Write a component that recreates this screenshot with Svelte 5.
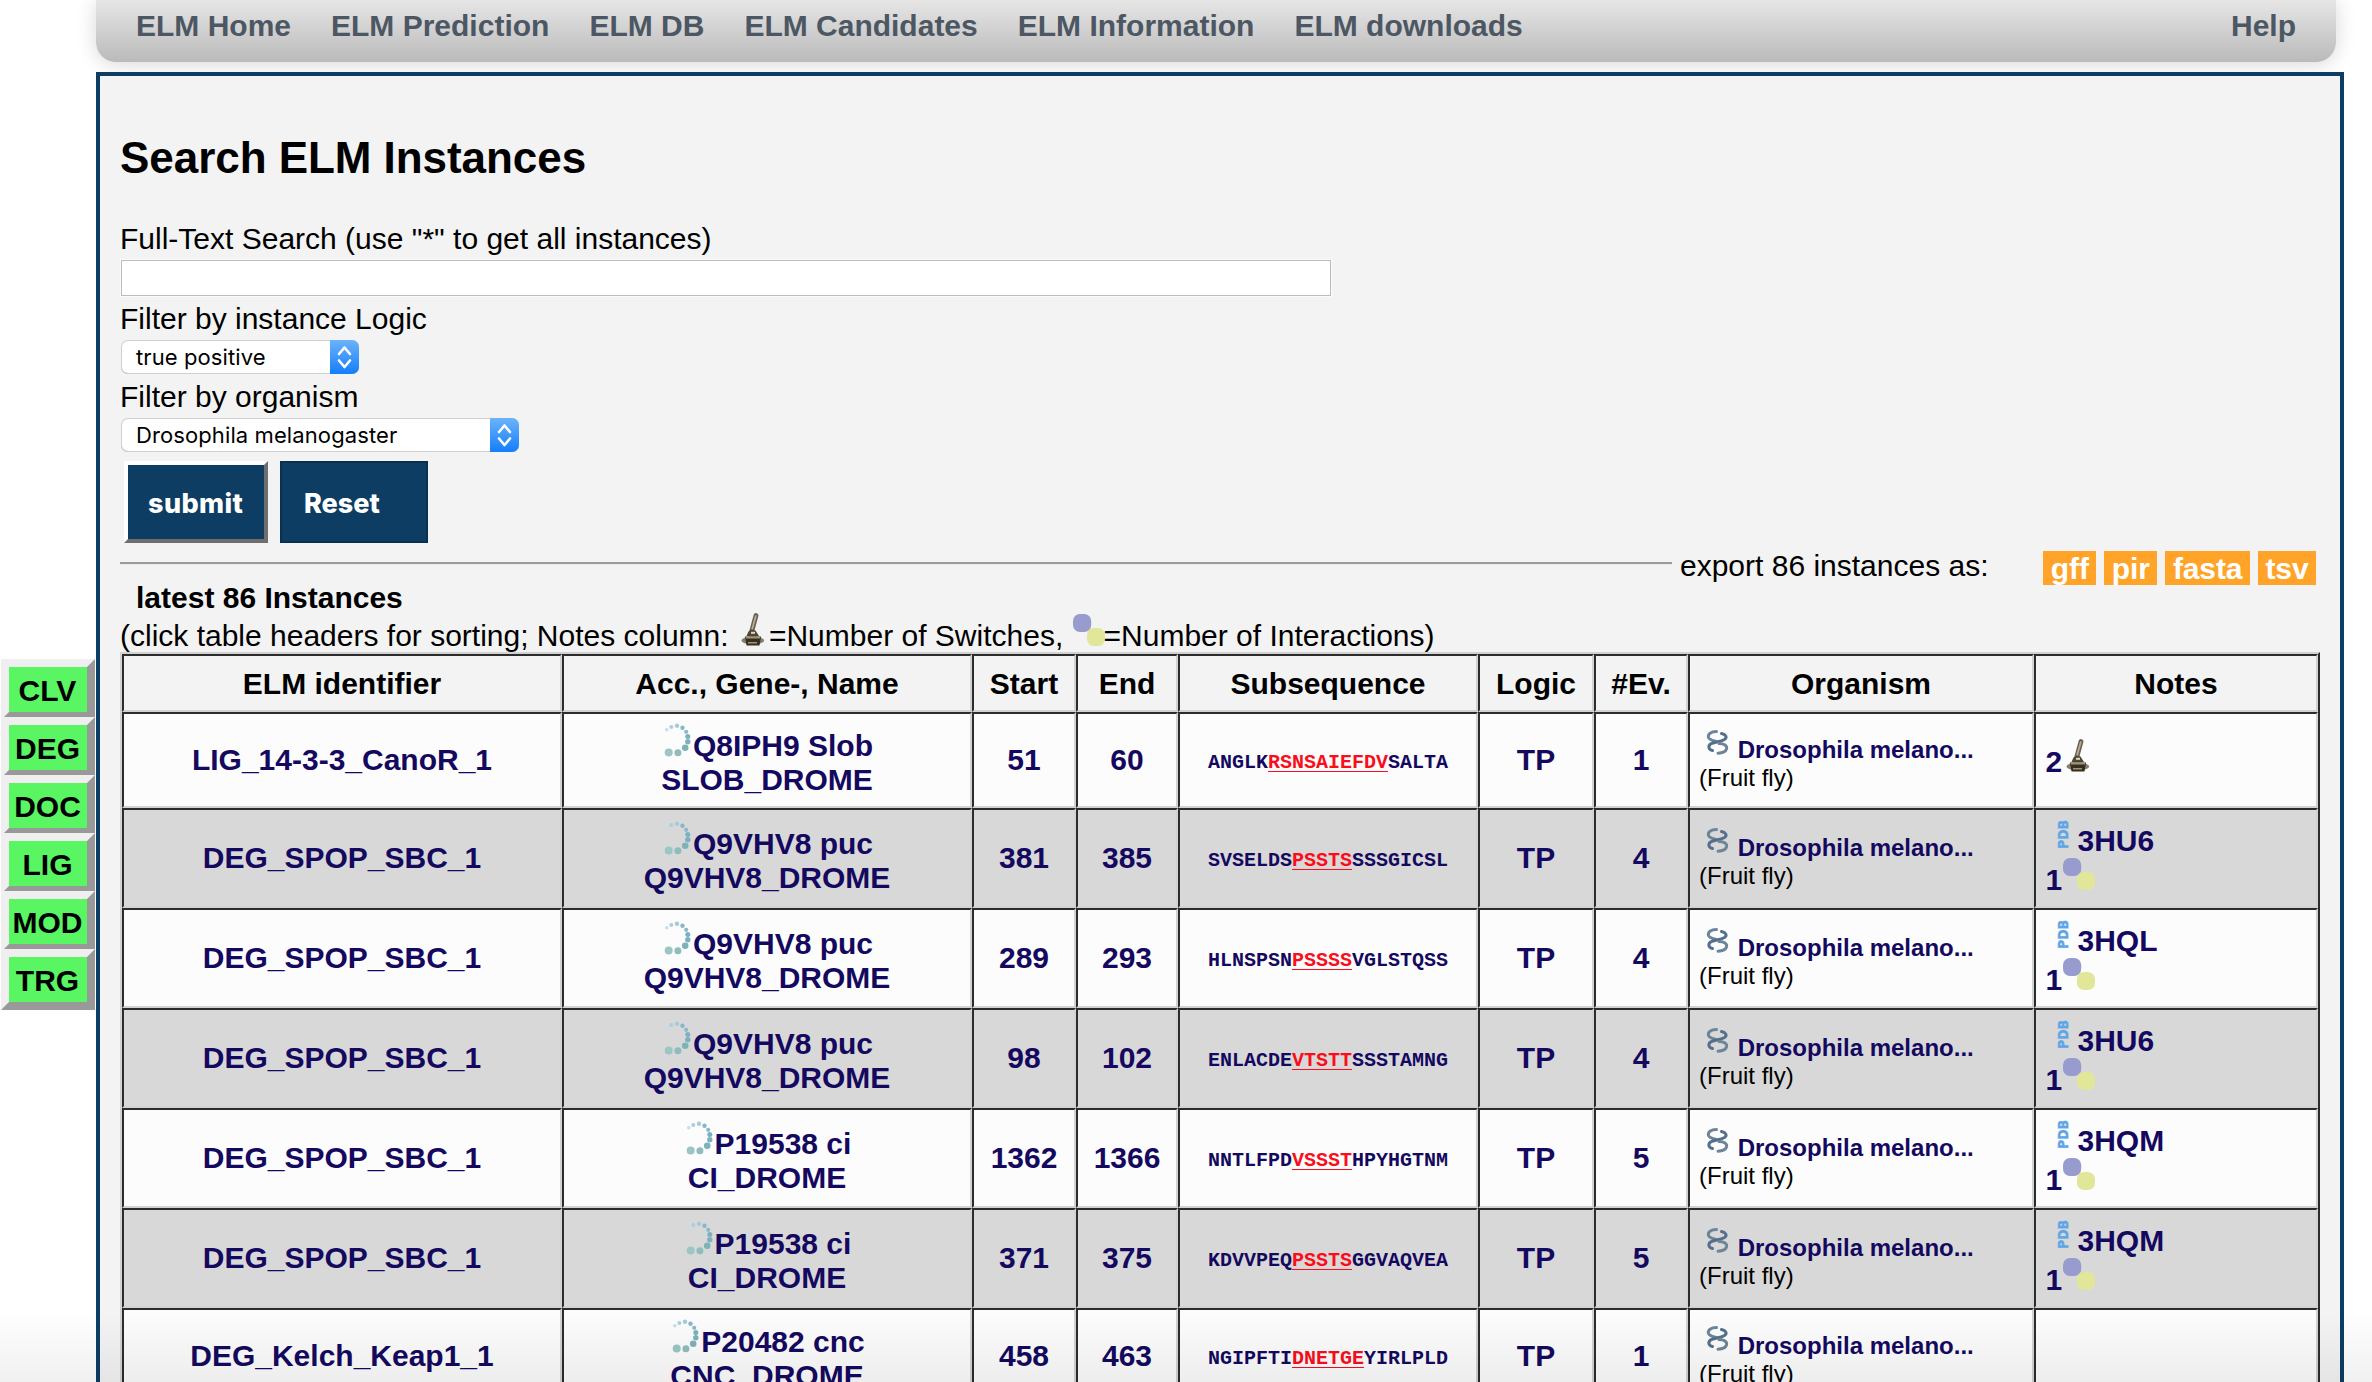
<script>
  const nav = ['ELM Home', 'ELM Prediction', 'ELM DB', 'ELM Candidates', 'ELM Information', 'ELM downloads'];
  const types = ['CLV', 'DEG', 'DOC', 'LIG', 'MOD', 'TRG'];
  const formats = ['gff', 'pir', 'fasta', 'tsv'];
  const headers = ['ELM identifier', 'Acc., Gene-, Name', 'Start', 'End', 'Subsequence', 'Logic', '#Ev.', 'Organism', 'Notes'];
  const rows = [
    { id: 'LIG_14-3-3_CanoR_1', acc: 'Q8IPH9 Slob', name: 'SLOB_DROME', start: 51, end: 60, seq: ['ANGLK', 'RSNSAIEFDV', 'SALTA'], ev: 1, switches: 2 },
    { id: 'DEG_SPOP_SBC_1', acc: 'Q9VHV8 puc', name: 'Q9VHV8_DROME', start: 381, end: 385, seq: ['SVSELDS', 'PSSTS', 'SSSGICSL'], ev: 4, pdb: '3HU6', inter: 1 },
    { id: 'DEG_SPOP_SBC_1', acc: 'Q9VHV8 puc', name: 'Q9VHV8_DROME', start: 289, end: 293, seq: ['HLNSPSN', 'PSSSS', 'VGLSTQSS'], ev: 4, pdb: '3HQL', inter: 1 },
    { id: 'DEG_SPOP_SBC_1', acc: 'Q9VHV8 puc', name: 'Q9VHV8_DROME', start: 98, end: 102, seq: ['ENLACDE', 'VTSTT', 'SSSTAMNG'], ev: 4, pdb: '3HU6', inter: 1 },
    { id: 'DEG_SPOP_SBC_1', acc: 'P19538 ci', name: 'CI_DROME', start: 1362, end: 1366, seq: ['NNTLFPD', 'VSSST', 'HPYHGTNM'], ev: 5, pdb: '3HQM', inter: 1 },
    { id: 'DEG_SPOP_SBC_1', acc: 'P19538 ci', name: 'CI_DROME', start: 371, end: 375, seq: ['KDVVPEQ', 'PSSTS', 'GGVAQVEA'], ev: 5, pdb: '3HQM', inter: 1 },
    { id: 'DEG_Kelch_Keap1_1', acc: 'P20482 cnc', name: 'CNC_DROME', start: 458, end: 463, seq: ['NGIPFTI', 'DNETGE', 'YIRLPLD'], ev: 1 }
  ];
</script>

{#snippet toggle()}
  <svg class="ico" viewBox="0 0 32 32">
    <g class="soft">
      <path d="M19 1.500L14.800 17" stroke="#6a6353" stroke-width="4.800" stroke-linecap="round" />
      <path d="M18.800 2L15.200 15" stroke="#b9ae93" stroke-width="1.700" stroke-linecap="round" />
      <path d="M11.500 17.500l3-2 4 1 3.500 5.500H9.500z" fill="#4d4535" />
      <ellipse cx="15.800" cy="26.500" rx="11.400" ry="4" fill="#6f6858" opacity=".85" />
      <path d="M8 22.500h16l-1.500 9h-13z" fill="#352e21" />
      <path d="M9 23.600h14M11 28.800h9" stroke="#a3966f" stroke-width="1.600" />
      <path d="M14 18.800h4" stroke="#e0d8c0" stroke-width="2" />
    </g>
  </svg>
{/snippet}

{#snippet dots()}
  <svg class="ico" viewBox="0 0 32 32">
    <rect x="1" y="0" width="18.200" height="18" rx="7" fill="#979bce" />
    <rect x="15" y="14" width="18" height="18" rx="7" fill="#e1e698" />
  </svg>
{/snippet}

{#snippet loader()}
  <svg class="ico" viewBox="0 0 32 32">
    <g class="soft">
      <circle cx="5.800" cy="5.800" r="1.800" fill="#c3dfe8" />
      <circle cx="10.300" cy="3" r="2" fill="#a9d0dc" />
      <circle cx="16" cy="1.800" r="2.200" fill="#a3cbd9" />
      <circle cx="21.500" cy="3.800" r="2.200" fill="#86b7ca" />
      <circle cx="25.200" cy="7.800" r="2.100" fill="#8ab9cb" />
      <circle cx="26.800" cy="12.500" r="2.500" fill="#7bb0c2" />
      <circle cx="26.800" cy="17.700" r="2.700" fill="#7eb1bd" />
      <circle cx="24.200" cy="23.800" r="3.300" fill="#7fb2b8" />
      <circle cx="16.900" cy="28.700" r="3.500" fill="#8fbcbd" />
      <circle cx="7.700" cy="28.400" r="4" fill="#9bc6c3" />
    </g>
  </svg>
{/snippet}

{#snippet dna()}
  <svg class="ico" viewBox="0 0 32 32">
    <g fill="none" stroke-width="3" stroke-linecap="round" class="soft">
      <path d="M17.500 5.500C12 5.500 8.500 8 9.500 11.500C10.500 14 14 14.500 17 15.500" stroke="#6d8499" />
      <path d="M22.500 7.500C27 8.500 28.500 11.500 25.500 13.500C21 16 15 16 11.500 18C8.500 20.500 10 24 13.500 24.500" stroke="#54708c" />
      <path d="M20 17.500C25 17.500 28.500 19.500 27.500 23C26.500 26 23 27 19 27.200" stroke="#6d8499" />
    </g>
  </svg>
{/snippet}

{#snippet pdb()}
  <svg class="ico" viewBox="0 0 32 32">
    <text class="pdb" transform="translate(21.500 30) rotate(-90)" textLength="29" lengthAdjust="spacingAndGlyphs">PDB</text>
  </svg>
{/snippet}

{#snippet select(value, kind)}
  <div class="select {kind}">
    <span>{value}</span>
    <i><svg viewBox="0 0 28 34"><path d="M8.500 14l5.500-6.500 5.500 6.500M8.500 20.500l5.500 6.500 5.500-6.500" fill="none" stroke="#fff" stroke-width="2.600" stroke-linecap="round" stroke-linejoin="round" /></svg></i>
  </div>
{/snippet}

<div class="page">
  <aside>
    {#each types as t}<b>{t}</b>{/each}
  </aside>
  <div class="main">
    <nav>
      {#each nav as n}<span>{n}</span>{/each}
      <span class="help">Help</span>
    </nav>
    <section>
      <h2>Search ELM Instances</h2>
      <label for="q">Full-Text Search (use "*" to get all instances)</label>
      <input id="q" type="text" />
      <p class="lab">Filter by instance Logic</p>
      {@render select('true positive', 'short')}
      <p class="lab">Filter by organism</p>
      {@render select('Drosophila melanogaster', 'long')}
      <div class="buttons">
        <button class="submit">submit</button>
        <button class="reset">Reset</button>
      </div>
      <div class="export">
        <hr />
        <span>export 86 instances as:</span>
        <div class="formats">{#each formats as f}<b>{f}</b>{/each}</div>
      </div>
      <p class="latest">latest 86 Instances</p>
      <p class="hint">(click table headers for sorting; Notes column: {@render toggle()}=Number of Switches, {@render dots()}=Number of Interactions)</p>
      <table>
        <colgroup>
          <col class="c1" /><col class="c2" /><col class="c3" /><col class="c4" /><col class="c5" /><col class="c6" /><col class="c7" /><col class="c8" /><col class="c9" />
        </colgroup>
        <thead>
          <tr>{#each headers as h}<th>{h}</th>{/each}</tr>
        </thead>
        <tbody>
          {#each rows as r, i}
            <tr class:odd={i % 2 === 1} class:low={!r.pdb}>
              <td>{r.id}</td>
              <td>{@render loader()}{r.acc}<br />{r.name}</td>
              <td>{r.start}</td>
              <td>{r.end}</td>
              <td class="seq">{r.seq[0]}<em>{r.seq[1]}</em>{r.seq[2]}</td>
              <td>TP</td>
              <td>{r.ev}</td>
              <td class="org"><div>{@render dna()} <b>Drosophila melano...</b></div><div class="fly">(Fruit fly)</div></td>
              <td class="notes">
                {#if r.switches}{r.switches}{@render toggle()}{/if}
                {#if r.pdb}<div>{@render pdb()}{r.pdb}</div><div>{r.inter}{@render dots()}</div>{/if}
              </td>
            </tr>
          {/each}
        </tbody>
      </table>
    </section>
  </div>
  <div class="fade"></div>
</div>

<style>
  :global(body) { margin: 0; background: #fff; }
  .page {
    position: relative;
    display: flex;
    width: 2372px;
    height: 1382px;
    overflow: hidden;
    background: #fff;
    font: 30px/34px "Liberation Sans", Arial, sans-serif;
    color: #000;
  }
  aside { width: 95px; padding: 659px 0 0 1px; box-sizing: border-box; flex: none; }
  aside b {
    display: flex;
    justify-content: center;
    height: 45px;
    width: 77px;
    padding-right: 1px;
    line-height: 47px;
    border: 8px solid;
    border-color: #efefef #999 #999 #efefef;
    background: #59f563;
  }
  aside b + b { margin-top: -3px; }
  .main { width: 2248px; margin-left: 1px; flex: none; }
  nav {
    display: flex;
    gap: 40px;
    width: 2240px;
    height: 62px;
    padding: 9px 40px 0;
    box-sizing: border-box;
    border-radius: 0 0 20px 20px;
    background: linear-gradient(#e6e6e6, #bababa);
    box-shadow: 0 2px 20px rgba(0, 0, 0, .16);
    color: #4d5763;
    font-weight: bold;
  }
  .help { margin-left: auto; }
  section {
    position: relative;
    margin-top: 10px;
    height: 1400px;
    padding: 57px 20px 0;
    box-sizing: border-box;
    border: 4px solid #0d3d63;
    background: #f3f3f3;
  }
  h2 { margin: 0 0 39px; font-size: 44px; line-height: 50px; letter-spacing: -.05px; }
  label { display: block; height: 38px; }
  p { margin: 0; }
  input {
    display: block;
    width: 1210px;
    height: 36px;
    margin-left: 1px;
    box-sizing: border-box;
    border: 1px solid #bcbcbc;
    background: #fff;
    outline: 1px solid #fafafa;
  }
  .lab { height: 38px; padding-top: 6px; }
  .select {
    display: flex;
    justify-content: space-between;
    height: 34px;
    margin-left: 1px;
    padding-left: 15px;
    box-sizing: border-box;
    border-radius: 7px;
    overflow: hidden;
    background: #fff;
    box-shadow: inset 0 0 0 1px #cfcfcf, inset 0 -1px 0 #b5b5b5;
    font: 22px/35px Inter, sans-serif;
    letter-spacing: .1px;
  }
  .short { width: 238px; }
  .long { width: 398px; }
  .select i { width: 29px; background: linear-gradient(#6cb3fa, #157efb); }
  .select svg { display: block; width: 29px; height: 34px; }
  .buttons { display: flex; gap: 12px; height: 82px; margin: 9px 0 8px 4px; }
  button {
    height: 82px;
    background: #0d3d63;
    color: #fff;
    font: 800 27px/34px Inter, sans-serif;
    text-align: left;
  }
  .submit { width: 144px; padding: 3px 0 0 20px; border: 4px solid; border-color: #fff #6e6e6e #6e6e6e #fff; letter-spacing: .4px; }
  .reset { width: 148px; padding: 3px 0 0 22px; border: 2px solid #0a3050; }
  .export { display: flex; height: 34px; }
  hr { flex: none; width: 1552px; height: 2px; margin: 11px 8px 0 0; border: 0; background: #9a9a9a; border-bottom: 1px solid #ebebeb; }
  .export span { line-height: 29px; white-space: nowrap; }
  .formats { display: flex; gap: 8px; margin-left: auto; margin-right: 4px; color: #fff; }
  .formats b { padding: 0 7.500px; background: #ffa329; overflow: hidden; line-height: 36px; height: 34px; letter-spacing: -.1px; }
  .latest { margin: -4px 0 -1px 16px; font-weight: bold; }
  .hint { height: 38px; line-height: 34px; white-space: nowrap; }
  .ico { width: 32px; height: 32px; vertical-align: baseline; overflow: visible; }
  .soft { filter: blur(.6px); }
  .pdb { font: bold 13.500px "DejaVu Sans", sans-serif; fill: #5fa6e6; stroke: #5fa6e6; stroke-width: .5px; }
  table {
    width: 2200px;
    table-layout: fixed;
    border-collapse: separate;
    border-spacing: 0;
    border: 2px solid;
    border-color: #d2d2d2 #2c2c2c #2c2c2c #d2d2d2;
  }
  .c1 { width: 440px; } .c2 { width: 410px; } .c3 { width: 104px; } .c4 { width: 102px; } .c5 { width: 300px; }
  .c6 { width: 116px; } .c7 { width: 94px; } .c8 { width: 346px; } .c9 { width: 284px; }
  th, td {
    box-sizing: border-box;
    padding: 0;
    border: 2px solid;
    border-color: #2c2c2c #d2d2d2 #d2d2d2 #2c2c2c;
    text-align: center;
    vertical-align: middle;
    white-space: nowrap;
  }
  th { height: 58px; padding-top: 1px; }
  td { height: 100px; font-weight: bold; color: #14095f; background: #fcfcfc; }
  .low td { height: 96px; }
  .odd td { background: #d8d8d8; }
  td.seq { font: bold 20px/24px "Liberation Mono", monospace; padding-top: 6px; }
  em { font-style: normal; color: #fb0d1b; text-decoration: underline; text-decoration-thickness: 1px; text-underline-offset: 3px; }
  td.org { text-align: left; padding: 0 0 3px 9px; font-size: 24px; line-height: 27px; }
  .fly { padding-top: 1px; font-weight: normal; color: #000; }
  td.notes { text-align: left; padding-left: 9.500px; }
  .low td.notes { padding-bottom: 2px; }
  .fade { position: absolute; left: 0; right: 0; bottom: 0; height: 70px; background: linear-gradient(rgba(0, 0, 0, 0), rgba(0, 0, 0, .06)); }
</style>
